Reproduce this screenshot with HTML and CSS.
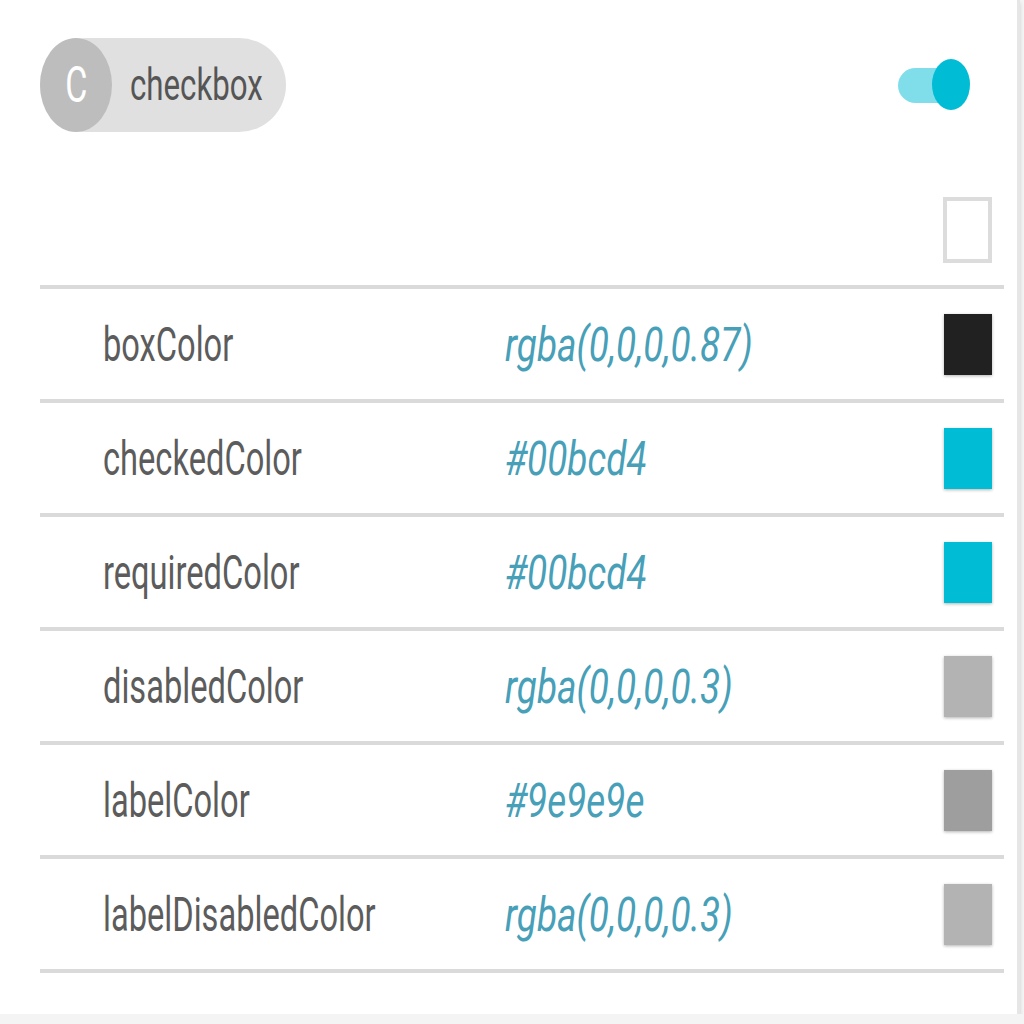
FILE: index.html
```html
<!DOCTYPE html>
<html>
<head>
<meta charset="utf-8">
<link rel="stylesheet" href="styles.css">
</head>
<body>
<div class="card">
  <div class="header">
    <div class="chip">
      <div class="avatar"><span class="sq">C</span></div>
      <span class="chip-label sq">checkbox</span>
    </div>
    <div class="toggle"><div class="track"></div><div class="thumb"></div></div>
  </div>
  <div class="check-row">
    <div class="checkbox"></div>
  </div>
  <div class="table">
    <div class="row">
      <span class="name sq">boxColor</span>
      <span class="value"><span class="sq sq-wide">rgba(0,0,0,0.87)</span></span>
      <span class="swatch swatch-dark"></span>
    </div>
    <div class="row">
      <span class="name sq">checkedColor</span>
      <span class="value"><span class="sq sq-wide">#00bcd4</span></span>
      <span class="swatch swatch-cyan"></span>
    </div>
    <div class="row">
      <span class="name sq">requiredColor</span>
      <span class="value"><span class="sq sq-wide">#00bcd4</span></span>
      <span class="swatch swatch-cyan"></span>
    </div>
    <div class="row">
      <span class="name sq">disabledColor</span>
      <span class="value"><span class="sq sq-wide">rgba(0,0,0,0.3)</span></span>
      <span class="swatch swatch-light"></span>
    </div>
    <div class="row">
      <span class="name sq">labelColor</span>
      <span class="value"><span class="sq sq-wide">#9e9e9e</span></span>
      <span class="swatch swatch-grey"></span>
    </div>
    <div class="row">
      <span class="name sq">labelDisabledColor</span>
      <span class="value"><span class="sq sq-wide">rgba(0,0,0,0.3)</span></span>
      <span class="swatch swatch-light"></span>
    </div>
  </div>
</div>
</body>
</html>
```

FILE: styles.css
```css
html, body {
  margin: 0;
  padding: 0;
  background: #f4f4f4;
  font-family: Roboto, "Liberation Sans", sans-serif;
}

.card {
  box-sizing: border-box;
  width: 1020px;
  height: 1014px;
  background: #ffffff;
  border-right: 3px solid #e6e6e6;
  box-shadow: 0 3px 4px rgba(0, 0, 0, 0.16);
  padding: 38px 13px 0 40px;
}

.sq {
  display: inline-block;
  transform: scaleX(0.68);
  transform-origin: left center;
  white-space: nowrap;
}

.sq-wide {
  transform: scaleX(0.77);
}

.header {
  display: flex;
  justify-content: space-between;
  align-items: center;
  padding-right: 34px;
  height: 94px;
}

.chip {
  display: flex;
  align-items: center;
  width: 246px;
  height: 94px;
  border-radius: 47px;
  background: #e0e0e0;
}

.avatar {
  width: 72px;
  height: 94px;
  border-radius: 50%;
  background: #bdbdbd;
  color: #ffffff;
  font-size: 50px;
  display: flex;
  align-items: center;
  justify-content: center;
  flex-shrink: 0;
}

.avatar .sq {
  transform-origin: center center;
}

.chip-label {
  margin-left: 18px;
  font-size: 44px;
  color: #555555;
  transform: scaleX(0.71);
}

.toggle {
  position: relative;
  width: 72px;
  height: 52px;
}

.track {
  position: absolute;
  left: 0;
  top: 9px;
  width: 62px;
  height: 35px;
  border-radius: 18px;
  background: #80deea;
}

.thumb {
  position: absolute;
  right: 0;
  top: 0;
  width: 38px;
  height: 51px;
  border-radius: 50%;
  background: #00bcd4;
}

.check-row {
  display: flex;
  justify-content: flex-end;
  padding: 65px 12px 22px 0;
}

.checkbox {
  box-sizing: border-box;
  width: 49px;
  height: 66px;
  border: 4px solid #dcdcdc;
  background: #ffffff;
}

.table {
  border-top: 4px solid #dadada;
}

.row {
  display: flex;
  align-items: center;
  height: 110px;
  border-bottom: 4px solid #dadada;
  padding-left: 63px;
  padding-right: 12px;
  font-size: 48px;
}

.name {
  width: 402px;
  color: #5c5c5c;
}

.value {
  flex: 1;
  font-style: italic;
  color: #479fb8;
}

.swatch {
  width: 48px;
  height: 61px;
  box-shadow: 0 1px 3px rgba(0, 0, 0, 0.3);
}

.swatch-dark { background: #212121; }
.swatch-cyan { background: #00bcd4; }
.swatch-light { background: #b3b3b3; }
.swatch-grey { background: #9e9e9e; }
```
